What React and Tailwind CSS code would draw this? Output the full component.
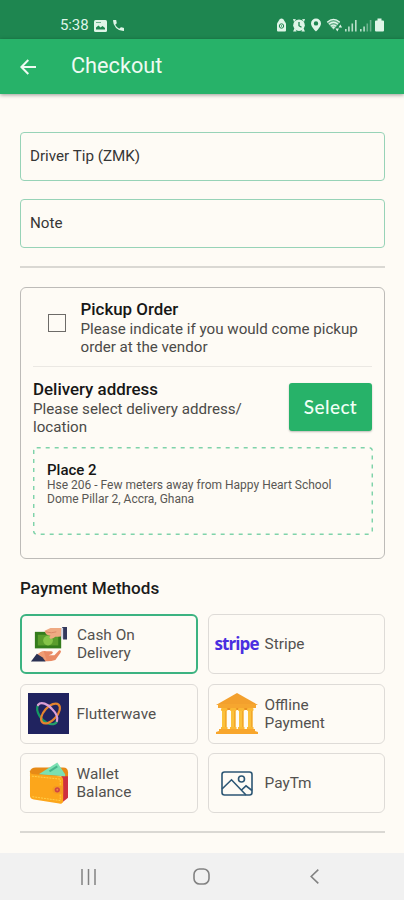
import { useState } from "react";

function StatusBar() {
  return (
    <div className="h-[39px] shrink-0 bg-[#1e8650] flex items-start justify-between pl-[60px] pr-[19px] pt-[18px] text-[#dff5e8]">
      <div className="flex items-center h-[15px]">
        <span className="text-[15px] leading-[15px] w-[28px] tracking-[-0.1px]">5:38</span>
        <svg className="ml-[6px]" width="13" height="12" viewBox="0 0 13 12">
          <rect width="13" height="12" rx="1.5" fill="currentColor" />
          <path d="M2 9.5V7.5L4.5 5.5L6.5 7.5L8.5 6L11 8V9.5Z" fill="#1e8650" />
          <path d="M2 2h5v1H2z" fill="#1e8650" opacity=".6" />
        </svg>
        <svg className="ml-[6px]" width="11" height="11" viewBox="3 3 18 18">
          <path
            d="M6.62 10.79a15.15 15.15 0 0 0 6.59 6.59l2.2-2.2a1 1 0 0 1 1.02-.24c1.12.37 2.33.57 3.57.57a1 1 0 0 1 1 1V20a1 1 0 0 1-1 1A17 17 0 0 1 3 4a1 1 0 0 1 1-1h3.5a1 1 0 0 1 1 1c0 1.25.2 2.45.57 3.57a1 1 0 0 1-.25 1.02z"
            fill="currentColor"
          />
        </svg>
      </div>
      <svg width="109" height="15" viewBox="0 0 109 15" fill="currentColor">
        {/* data saver */}
        <path d="M1 5.5L3.5 1.5Q5.5 -.5 7.5 1.5L10 5.5V12.5Q10 13.5 9 13.5H2Q1 13.5 1 12.5Z" />
        <circle cx="5.5" cy="8" r="2.2" fill="none" stroke="#1e8650" strokeWidth="1" />
        <circle cx="5.5" cy="8" r=".7" fill="#1e8650" />
        {/* alarm */}
        <path d="M17 1l3 .2L18 4zM29 1l-3 .2L28 4z" />
        <circle cx="23" cy="7.2" r="5.8" />
        <path d="M18.5 10l-1.4 3.5h3.5zM27.5 10l1.4 3.5h-3.5z" />
        <path d="M23 4v3.7l2.5 1.5" fill="none" stroke="#1e8650" strokeWidth="1.3" />
        {/* location */}
        <path fillRule="evenodd" d="M40 .5a5 5 0 0 1 5 5C45 9 40 13.5 40 13.5S35 9 35 5.5a5 5 0 0 1 5-5zM40 3.2a2.2 2.2 0 1 0 0 4.4a2.2 2.2 0 1 0 0-4.4z" />
        {/* wifi */}
        <path d="M51 4.2Q57.5-2 64 4.2L57.5 12z" opacity=".35" />
        <g fill="none" stroke="currentColor" strokeWidth="1.3">
          <path d="M51.2 4.2Q57.5-1.4 63.8 4.2M53 6.2Q57.5 2.2 62 6.2M54.8 8.2Q57.5 6 60.2 8.2" />
        </g>
        <path d="M55.5 8.8L57.5 11L59.5 8.8Q57.5 7.5 55.5 8.8z" />
        <path d="M59.5 10.5h3.5l-1.7 3zM62.5 9.5l1.8-3 1.8 3z" />
        {/* signal */}
        <path d="M69 11h1.6v2.5H69zM72.1 8.5h1.6v5h-1.6zM75.5 5.5h1.6v8h-1.6zM79 2h1.6v11.5H79z" opacity=".8" />
        <path d="M84 11h1.6v2.5H84zM87.3 8.5h1.6v5h-1.6z" opacity=".8" />
        <path d="M90.5 5.5h1.6v8h-1.6zM93.8 2h1.6v11.5h-1.6z" opacity=".4" />
        {/* battery */}
        <path d="M101.5 .5h4v2h1.5q1 0 1 1v9q0 1-1 1h-7q-1 0-1-1v-9q0-1 1-1h1.5z" />
      </svg>
    </div>
  );
}

function Header() {
  return (
    <div className="h-[55px] shrink-0 bg-[#27b269] flex items-center pl-5 text-[#eefaf2] shadow-[0_1px_4px_rgba(0,0,0,0.4)]">
      <svg width="16" height="16" viewBox="0 0 16 16" fill="none" stroke="currentColor" strokeWidth="2">
        <path d="M16 8H1.5M8.3 1L1.4 8l6.9 7" />
      </svg>
      <h1 className="ml-[35px] -mt-[2px] text-[21.7px] leading-6">Checkout</h1>
    </div>
  );
}

function Field({ label }) {
  return (
    <div className="h-[49px] rounded-[4px] border-[1.5px] border-[#97d3b7] px-[9px] flex items-center text-[15.2px] text-[#363636]">
      {label}
    </div>
  );
}

function CashIcon() {
  return (
    <svg width="38" height="36" viewBox="3 5 39 37" preserveAspectRatio="none">
      <path d="M8 11h27v17H8z" fill="#347c1c" />
      <path d="M11 14h21v11H11z" fill="#5b9d2d" />
      <circle cx="21.5" cy="20" r="5" fill="#86c449" />
      <path d="M18 10l6-3h13v8q-3 1-5 1h-3q-2 2-5 2-2-1 0-3-5 0-6-5z" fill="#efaa83" />
      <path d="M19 11q6 2 11 0" fill="none" stroke="#d98765" strokeWidth="1" />
      <path d="M36 6h5v13h-4z" fill="#34395d" />
      <path d="M35 7h2v11h-2z" fill="#d4d8e5" />
      <path d="M12 33q4-3 8-2h5q3 1 0 3l-3 1h6l5-5q3 0 1 3l-5 7q-6 2-12 1z" fill="#e98a64" />
      <path d="M10 34l7-3 3 9-6 0z" fill="#ef9c74" />
      <path d="M4 41.5l6-8 6 4 3 4z" fill="#2b3153" />
    </svg>
  );
}

function StripeLogo() {
  return <span className="text-[17px] leading-5 font-bold tracking-[-0.9px] text-[#4a2fe0] font-['Open_Sans',sans-serif]">stripe</span>;
}

function FlutterwaveIcon() {
  return (
    <svg width="41" height="41" viewBox="0 0 41 41">
      <rect width="41" height="41" fill="#20235f" />
      <g fill="none" strokeWidth="2.2" strokeLinecap="round">
        <path d="M10 12c-3 6 3 15 9 18" stroke="#159b63" />
        <path d="M19 30c4 2 10 2 10-3" stroke="#25a06a" />
        <ellipse cx="22.5" cy="20.5" rx="12" ry="6.5" transform="rotate(-48 22.5 20.5)" stroke="#e4832e" />
        <path d="M10 12c3-4 10-1 14 4 4 4 6 9 5 12" stroke="#dc9fd5" />
      </g>
    </svg>
  );
}

function BankIcon() {
  return (
    <svg width="42" height="41" viewBox="0 0 42 41">
      <path d="M21 0L42 12H0z" fill="#f3a02d" />
      <path d="M2 11h38v4H2z" fill="#f6a62f" />
      <path d="M6 15h30v2H6z" fill="#e99025" />
      {[6, 15, 23, 32].map((x) => (
        <g key={x}>
          <rect x={x} y="17" width="4.5" height="18" fill="#fbc13a" />
          <rect x={x + 3} y="17" width="1.5" height="18" fill="#f3a72b" />
          <rect x={x - 1} y="15" width="6.5" height="3" rx="1" fill="#fbb833" />
          <rect x={x - 1} y="34" width="6.5" height="3" fill="#fbb833" />
        </g>
      ))}
      <path d="M3 36h36v2l3 1v2H0v-2l3-1z" fill="#f8a62c" />
    </svg>
  );
}

function WalletIcon() {
  return (
    <svg width="40" height="43" viewBox="0 0 41 43">
      <path d="M33 11l7 1V36l-6 5z" fill="#cf3040" />
      <path d="M1 9q1-4 6-4h28q5 0 5 5v4H1z" fill="#e78a16" />
      <path d="M10 12L29 0l8 12v2z" fill="#7be0b2" />
      <path d="M21 9l8-5" stroke="#47b58a" strokeWidth="2" />
      <path d="M1 9q0 3 4 3l26 2q4 0 4 4v21q0 4-4 3L5 38q-4-1-4-4z" fill="#fca61b" />
      <path d="M3 14l29 3v22L3 35" fill="none" stroke="#ffd04a" strokeWidth="1" strokeDasharray="2 1" />
      <path d="M27 24h8v8h-8q-3-1-3-4t3-4z" fill="#f59a22" />
      <circle cx="29" cy="28" r="2.7" fill="#cf4546" />
      <circle cx="29" cy="28" r="1" fill="#f08a4a" />
    </svg>
  );
}

function ImageIcon() {
  return (
    <svg width="32" height="25" viewBox="0 0 32 25" fill="none" stroke="#2c5674" strokeWidth="1.6">
      <rect x="1" y="1" width="30" height="23" rx="2.5" />
      <circle cx="20.5" cy="8" r="3" />
      <path d="M1 18L10.5 8.8L25 24M20.5 19L25 14.8L31 19.5" />
    </svg>
  );
}

const methods = [
  { name: "Cash On\nDelivery", icon: <CashIcon />, selected: true },
  { name: "Stripe", icon: <StripeLogo /> },
  { name: "Flutterwave", icon: <FlutterwaveIcon /> },
  { name: "Offline\nPayment", icon: <BankIcon /> },
  { name: "Wallet\nBalance", icon: <WalletIcon /> },
  { name: "PayTm", icon: <ImageIcon /> },
];

function NavBar() {
  return (
    <div className="h-[47px] shrink-0 bg-[#f1f1f1] flex items-center pl-[81px] text-[#828282]">
      <svg width="15" height="16" viewBox="0 0 15 16" fill="none" stroke="currentColor" strokeWidth="1.5">
        <path d="M1 0v16M7.5 0v16M14 0v16" />
      </svg>
      <svg className="ml-[97px]" width="17" height="17" viewBox="0 0 17 17" fill="none" stroke="currentColor" strokeWidth="1.6">
        <rect x="1" y="1" width="15" height="15" rx="5.5" />
      </svg>
      <svg className="ml-[100px]" width="9" height="15" viewBox="0 0 9 15" fill="none" stroke="currentColor" strokeWidth="1.6">
        <path d="M8.3 .7L1.2 7.5l7.1 6.8" />
      </svg>
    </div>
  );
}

export default function App() {
  const [pickup, setPickup] = useState(false);

  return (
    <div className="w-[404px] h-[900px] flex flex-col overflow-hidden bg-[#fefbf5] font-[Roboto,sans-serif]">
      <StatusBar />
      <Header />

      <main className="flex-1 min-h-0 pl-5 pr-[19px] pt-[38px]">
        <div className="space-y-[18px]">
          <Field label="Driver Tip (ZMK)" />
          <Field label="Note" />
        </div>
        <hr className="mt-[18px] border-0 h-[2px] bg-[#dad8d3]" />

        {/* Delivery details */}
        <section className="mt-[19px] h-[272px] rounded-[6px] border border-[#bdbbb8] px-3">
          <div className="h-[79px] border-b border-[#ebe8e3] flex pt-[11px]">
            <button
              aria-label="Pickup order"
              aria-pressed={pickup}
              onClick={() => setPickup(!pickup)}
              className="ml-[15px] mt-[15px] w-[18px] h-[18px] border-[1.5px] border-[#6d6b68] text-[12px] leading-3 shrink-0"
            >
              {pickup ? "✓" : ""}
            </button>
            <div className="ml-[14.5px] whitespace-nowrap">
              <h2 className="text-[16.9px] leading-[21px] font-medium text-[#171717]">Pickup Order</h2>
              <p className="text-[15.15px] leading-[18px] text-[#4b4a48]">
                Please indicate if you would come pickup
                <br />
                order at the vendor
              </p>
            </div>
          </div>

          <div className="flex justify-between pt-[12px] h-[80px]">
            <div className="whitespace-nowrap">
              <h2 className="text-[16.9px] leading-[21px] font-medium text-[#171717]">Delivery address</h2>
              <p className="text-[15.15px] leading-[18px] text-[#4b4a48]">
                Please select delivery address/
                <br />
                location
              </p>
            </div>
            <button className="mt-[4px] w-[83px] h-[48px] rounded-[3px] bg-[#27b269] text-[#f0fff5] text-[19px] font-medium tracking-[0.4px] font-[Lato,sans-serif] shadow-[0_1px_2px_rgba(0,0,0,0.25)]">
              Select
            </button>
          </div>

          <div className="relative h-[88px] px-[14px] pt-[15px] whitespace-nowrap">
            <svg className="absolute inset-0" width="340" height="88" fill="none">
              <rect x=".7" y=".7" width="338.6" height="86.6" rx="3" stroke="#7fd3aa" strokeWidth="1.5" strokeDasharray="4 5" />
            </svg>
            <h3 className="text-[15px] leading-4 font-medium text-[#151515]">Place 2</h3>
            <p className="text-[12px] leading-[14px] text-[#595754]">
              Hse 206 - Few meters away from Happy Heart School
              <br />
              Dome Pillar 2, Accra, Ghana
            </p>
          </div>
        </section>

        <h2 className="mt-[18px] text-[17.1px] leading-[22px] font-medium text-[#1b1b1b]">Payment Methods</h2>
        <div className="mt-[15px] grid grid-cols-[178px_177px] gap-x-[10px] gap-y-[9.5px]">
          {methods.map((m) => (
            <div
              key={m.name}
              className={
                m.selected
                  ? "h-[60px] rounded-[6px] border-2 border-[#3cb381] flex items-center pl-[6px]"
                  : "h-[60px] rounded-[6px] border border-[#dedbd7] flex items-center pl-[6.5px]"
              }
            >
              <div className="w-[42px] flex justify-center shrink-0">{m.icon}</div>
              <span className="ml-[7px] text-[15.4px] leading-[18px] text-[#53514f] whitespace-pre">{m.name}</span>
            </div>
          ))}
        </div>
        <hr className="mt-[18px] border-0 h-[2px] bg-[#dad8d3]" />
      </main>

      <NavBar />
    </div>
  );
}
